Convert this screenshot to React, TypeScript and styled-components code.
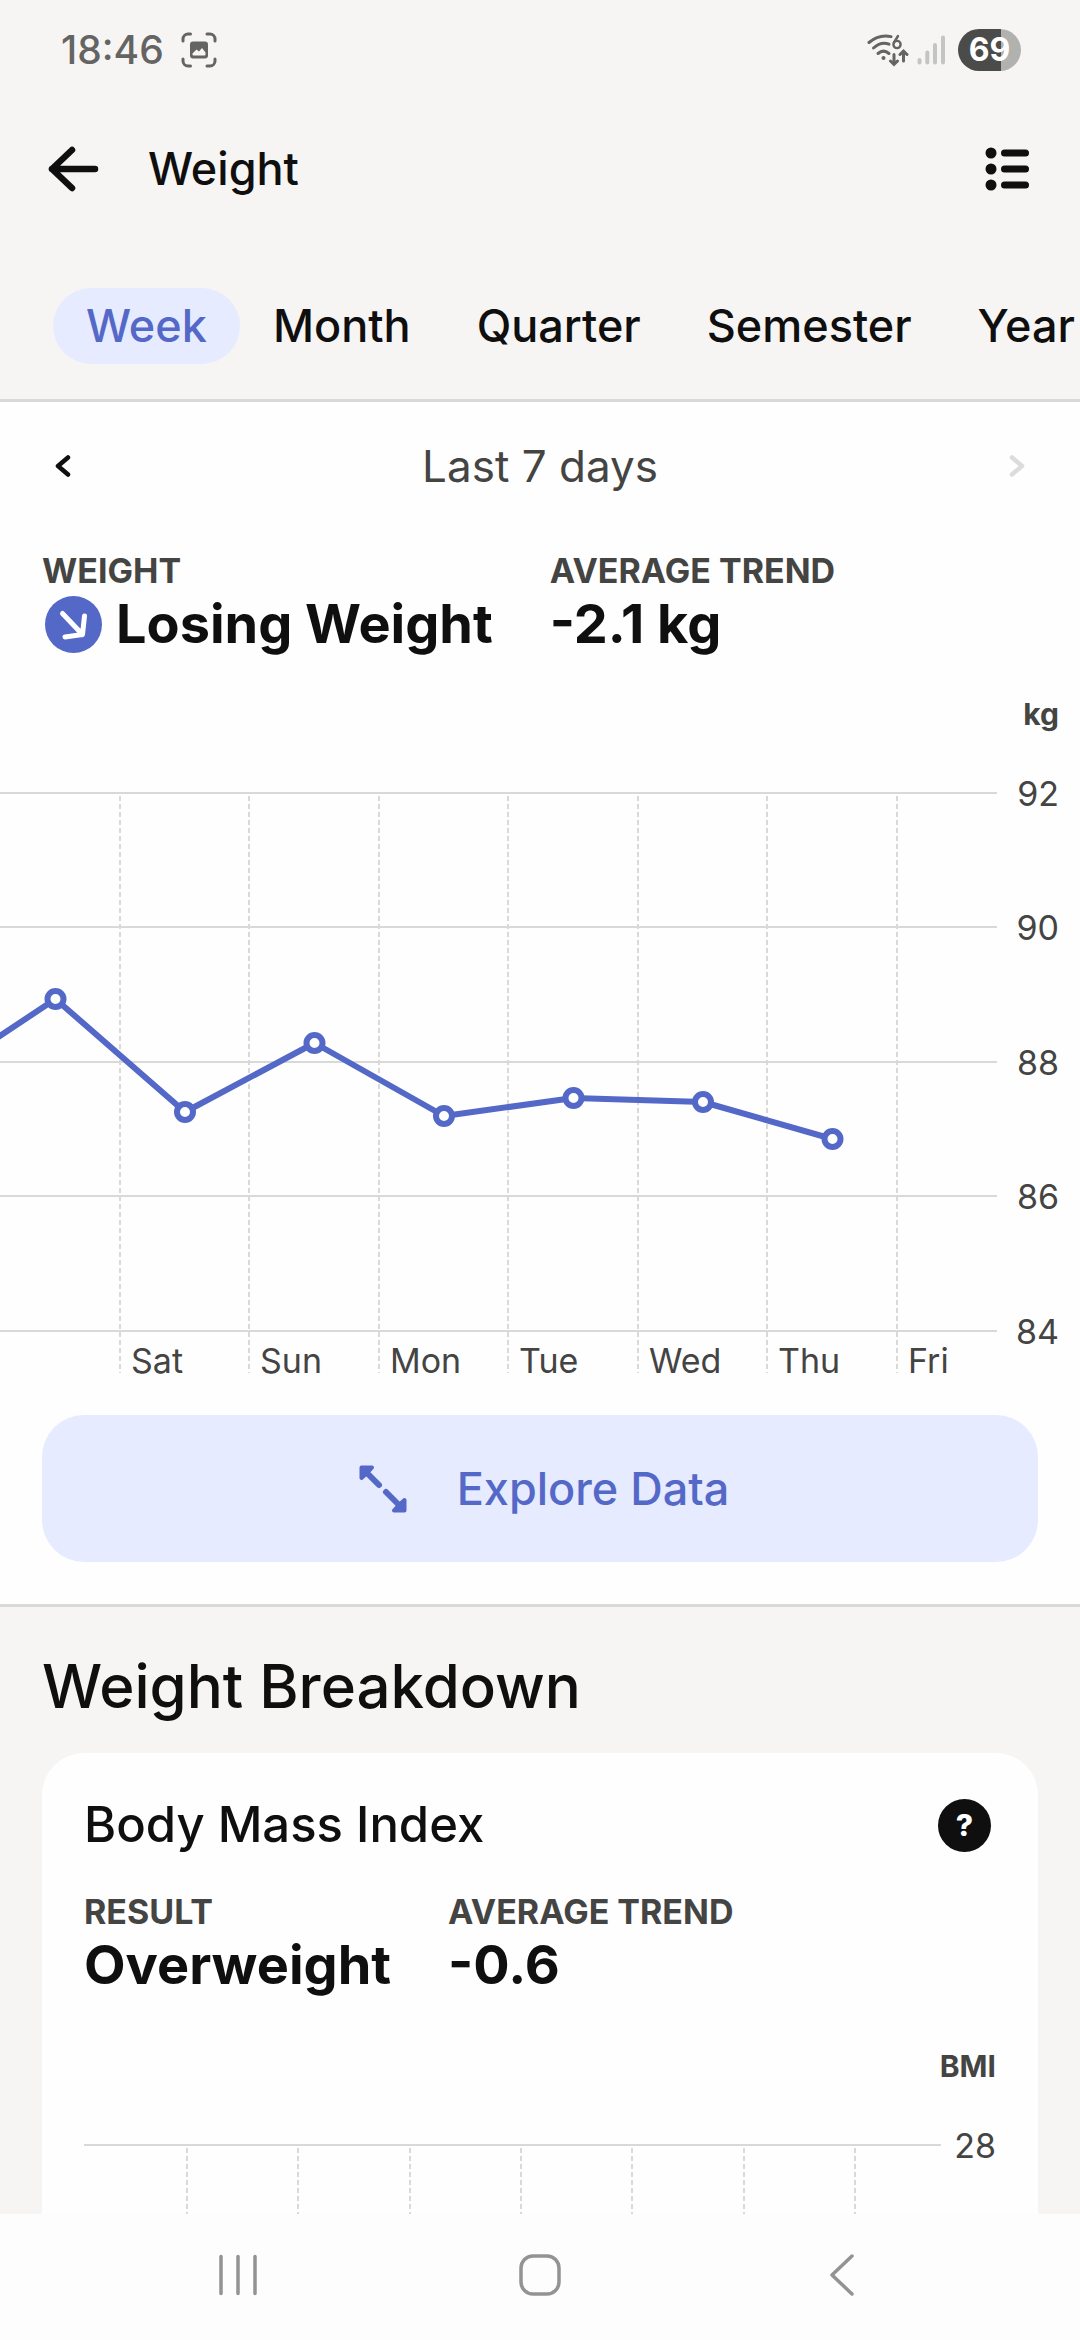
import React from "react";
import styled, { createGlobalStyle } from "styled-components";

const color = {
  page: "#f6f5f3",
  surface: "#fefefe",
  ink: "#0f0f0f",
  muted: "#444443",
  line: "#d9d9d8",
  accent: "#5468c7",
  tint: "#e6ebff",
  disabled: "#dcdcdb",
  system: "#646463",
  nav: "#939393",
};

const font = `Inter, "Liberation Sans", sans-serif`;

const GlobalStyle = createGlobalStyle`
  * { box-sizing: border-box; }
  body {
    margin: 0;
    background: ${color.page};
    color: ${color.ink};
    font-family: ${font};
  }
  button { font: inherit; color: inherit; border: 0; background: none; padding: 0; cursor: pointer; }
  h1, h2, h3, dl, dt, dd { margin: 0; }
  svg { display: block; flex: none; }
`;

const Screen = styled.div`
  height: 100vh;
  display: flex;
  flex-direction: column;
  overflow: hidden;
`;

const StatusBar = styled.div`
  flex: none;
  height: 100px;
  padding: 0 59px 0 61px;
  display: flex;
  align-items: center;
  justify-content: space-between;
  color: ${color.system};
`;

const StatusGroup = styled.div<{ $gap: number }>`
  display: flex;
  align-items: center;
  gap: ${(p) => p.$gap}px;
`;

const Clock = styled.span`
  font-size: 39px;
  line-height: 44px;
  font-weight: 500;
`;

const Battery = styled.span`
  width: 63px;
  height: 42px;
  margin-left: 4px;
  border-radius: 21px;
  background: linear-gradient(to right, #4b4b4a 69%, #b1b1b0 69%);
  color: #ffffff;
  font-size: 32px;
  line-height: 42px;
  font-weight: 700;
  text-align: center;
`;

const AppBar = styled.header`
  flex: none;
  height: 138px;
  padding: 0 51px 0 48px;
  display: flex;
  align-items: center;
`;

const Title = styled.h1`
  flex: 1;
  margin-left: 49px;
  font-size: 45px;
  line-height: 60px;
  font-weight: 500;
`;

const Tabs = styled.nav`
  flex: none;
  display: flex;
  padding: 50px 0 35px 53px;
  border-bottom: 3px solid ${color.line};
  overflow: hidden;
`;

const Tab = styled.button<{ $active?: boolean }>`
  flex: none;
  height: 76px;
  padding: 0 33px;
  border-radius: 38px;
  font-size: 45px;
  line-height: 60px;
  font-weight: 500;
  background: ${(p) => (p.$active ? color.tint : "transparent")};
  color: ${(p) => (p.$active ? color.accent : color.ink)};
`;

const Content = styled.main`
  flex: 1;
  min-height: 0;
  overflow-y: auto;
  scrollbar-width: none;
`;

const Panel = styled.section`
  background: ${color.surface};
  border-bottom: 3px solid ${color.line};
  padding-bottom: 42px;
`;

const RangeRow = styled.div`
  height: 128px;
  padding: 0 55px;
  display: flex;
  align-items: center;
  justify-content: space-between;
`;

const RangeButton = styled.button`
  display: flex;
  &:disabled { color: ${color.disabled}; }
`;

const RangeLabel = styled.span`
  font-size: 44px;
  line-height: 60px;
  color: ${color.muted};
`;

const Stats = styled.dl<{ $inset?: boolean }>`
  display: flex;
  gap: 57px;
  padding: ${(p) => (p.$inset ? "35px 0 0" : "19px 42px 0")};
`;

const StatLabel = styled.dt`
  font-size: 34px;
  line-height: 44px;
  font-weight: 700;
  color: ${color.muted};
`;

const StatValue = styled.dd`
  display: flex;
  align-items: center;
  gap: 14px;
  font-size: 54px;
  line-height: 62px;
  font-weight: 700;
  white-space: nowrap;
`;

const TrendBadge = styled.span`
  width: 57px;
  height: 57px;
  margin-left: 3px;
  border-radius: 50%;
  background: ${color.accent};
`;

const Chart = styled.svg`
  width: 100%;
  height: auto;
  font-family: ${font};
  fill: ${color.muted};
`;

const ExploreButton = styled.button`
  display: flex;
  align-items: center;
  justify-content: center;
  gap: 50px;
  width: calc(100% - 84px);
  height: 147px;
  margin: 30px 42px 0;
  padding-left: 8px;
  border-radius: 42px;
  background: ${color.tint};
  color: ${color.accent};
  font-size: 45px;
  line-height: 60px;
  font-weight: 500;
`;

const Breakdown = styled.section`
  padding: 41px 42px 42px;
`;

const SectionTitle = styled.h2`
  font-size: 60px;
  line-height: 76px;
  font-weight: 500;
`;

const Card = styled.article`
  margin-top: 29px;
  padding: 42px;
  border-radius: 42px;
  background: ${color.surface};
`;

const CardHeader = styled.div`
  display: flex;
  align-items: center;
  justify-content: space-between;
  height: 60px;
  padding-right: 5px;
`;

const CardTitle = styled.h3`
  font-size: 49px;
  line-height: 60px;
  font-weight: 500;
`;

const HelpButton = styled.button`
  width: 53px;
  height: 53px;
  border-radius: 50%;
  background: ${color.ink};
  color: #ffffff;
  font-size: 30px;
  line-height: 53px;
  font-weight: 800;
`;

const NavBar = styled.nav`
  flex: none;
  height: 126px;
  padding: 0 208px 4px;
  display: flex;
  align-items: center;
  justify-content: space-between;
  background: #fdfdfd;
`;

const NavButton = styled.button`
  width: 60px;
  height: 60px;
  display: flex;
  align-items: center;
  justify-content: center;
`;

const CaptureIcon = () => (
  <svg width="36" height="36" viewBox="0 0 36 36" aria-hidden="true">
    <g fill="none" stroke="currentColor" strokeWidth="3" strokeLinecap="round">
      <path d="M2 9V7a5 5 0 0 1 5-5h2.500M26 2h3a5 5 0 0 1 5 5v2M34 27v2a5 5 0 0 1-5 5h-3M9.500 34H7a5 5 0 0 1-5-5v-2" />
    </g>
    <path
      fillRule="evenodd"
      fill="currentColor"
      d="M12 9.500h12a3 3 0 0 1 3 3v11a3 3 0 0 1-3 3H12a3 3 0 0 1-3-3v-11a3 3 0 0 1 3-3ZM11.500 22.500q0 1 1 1h11q1 0 1-1v-2l-3.500-4.500-3 3.500-2.500-2-4 4Z"
    />
  </svg>
);

const WifiIcon = () => (
  <svg width="42" height="34" viewBox="0 0 42 34" fill="none" stroke="currentColor" aria-hidden="true">
    <g strokeWidth="3" strokeLinecap="round">
      <path d="M2 9.500Q12 1 24 3.600" />
      <path d="M6.500 15Q14 8.200 22 11.200" />
      <path d="M11 20.500q5.500-4.800 11 0" />
      <path d="M27 21.500v9M23.500 28l3.500 3.500 3.500-3.500M36.500 28v-9M33 21.500l3.500-3.500 3.500 3.500" />
    </g>
    <circle cx="16.500" cy="25" r="2" fill="currentColor" stroke="none" />
    <circle cx="30" cy="11.500" r="3.600" strokeWidth="2.400" />
    <path d="M27 9.500 31 3" strokeWidth="2.400" strokeLinecap="round" />
  </svg>
);

const SignalIcon = () => (
  <svg width="29" height="30" viewBox="0 0 29 30" fill="none" stroke="#c4c4c3" strokeWidth="4" strokeLinecap="round" aria-hidden="true">
    <path d="M2.500 25v2.500M10.300 17.500v10M18 10v17.500M26 2.500v25" />
  </svg>
);

const BackIcon = () => (
  <svg width="51" height="46" viewBox="0 0 51 46" fill="none" stroke="currentColor" strokeWidth="6.500" strokeLinecap="round" strokeLinejoin="round" aria-hidden="true">
    <path d="M24 4 4 23 24 42M4 23h43" />
  </svg>
);

const ListIcon = () => (
  <svg width="44" height="46" viewBox="0 0 44 46" aria-hidden="true">
    {[7, 23, 39].map((y) => (
      <g key={y} fill="currentColor">
        <circle cx="6" cy={y} r="5.500" />
        <rect x="16" y={y - 3.5} width="28" height="7" rx="3.500" />
      </g>
    ))}
  </svg>
);

const Chevron = ({ flip }: { flip?: boolean }) => (
  <svg width="16" height="22" viewBox="0 0 16 22" fill="none" stroke="currentColor" strokeWidth="4.500" strokeLinecap="round" strokeLinejoin="round" aria-hidden="true">
    <path d={flip ? "M3 2.500 13 11 3 19.500" : "M13 2.500 3 11 13 19.500"} />
  </svg>
);

const TrendDownIcon = () => (
  <svg width="57" height="57" viewBox="0 0 57 57" fill="none" stroke="#ffffff" strokeWidth="5" strokeLinecap="round" strokeLinejoin="round" aria-hidden="true">
    <path d="M17.500 17.500 37.500 38.500M39.500 20 37.500 38.500 20 41" />
  </svg>
);

const ExpandIcon = () => (
  <svg width="48" height="48" viewBox="0 0 48 48" fill="none" stroke="currentColor" strokeLinecap="round" strokeLinejoin="round" aria-hidden="true">
    <path strokeWidth="6" d="M5 5 20 20M27 27 43 43" />
    <path strokeWidth="4" fill="currentColor" d="M2.500 2.500H13L9 7 7 9 2.500 13ZM45.500 45.500H35L39 41 41 39 45.500 35Z" />
  </svg>
);

const DAY_WIDTH = 129.5;
const FIRST_DAY = 120;
const days = ["Sat", "Sun", "Mon", "Tue", "Wed", "Thu", "Fri"];
const ticks = [92, 90, 88, 86, 84];
const readings = [344, 457, 388, 461, 443, 447, 484];

const WeightChart = () => {
  const points = readings.map((y, i) => [55.5 + i * DAY_WIDTH, y]);
  return (
    <Chart viewBox="0 0 1080 730" role="img" aria-label="Weight over the last 7 days, in kilograms">
      <text x="1059" y="70" fontSize="30" fontWeight="700" textAnchor="end">kg</text>
      {ticks.map((tick, i) => {
        const y = 138 + Math.floor(i * 134.5);
        return (
          <g key={tick}>
            <path d={`M0 ${y}H997`} stroke={color.line} strokeWidth="2" />
            <text x="1059" y={y + 13} fontSize="34" textAnchor="end">{tick}</text>
          </g>
        );
      })}
      {days.map((day, i) => {
        const x = Math.floor(FIRST_DAY + i * DAY_WIDTH);
        return (
          <g key={day}>
            <path d={`M${x} 141V718`} stroke={color.line} strokeWidth="2" strokeDasharray="5 3" />
            <text x={x + 11} y="718" fontSize="34">{day}</text>
          </g>
        );
      })}
      <polyline
        points={`-74,430 ${points.map((p) => p.join(",")).join(" ")}`}
        fill="none"
        stroke={color.accent}
        strokeWidth="6"
        strokeLinejoin="round"
      />
      {points.map(([x, y]) => (
        <circle key={x} cx={x} cy={y} r="8" fill={color.surface} stroke={color.accent} strokeWidth="6" />
      ))}
    </Chart>
  );
};

const BmiChart = () => (
  <Chart viewBox="0 0 912 420" role="img" aria-label="Body mass index over the last 7 days">
    <text x="912" y="81" fontSize="30" fontWeight="700" textAnchor="end">BMI</text>
    <path d="M0 149H857" stroke={color.line} strokeWidth="2" />
    <text x="912" y="162" fontSize="34" textAnchor="end">28</text>
    {days.map((day, i) => (
      <path
        key={day}
        d={`M${Math.round(103 + i * 111.3)} 152V400`}
        stroke={color.line}
        strokeWidth="2"
        strokeDasharray="5 3"
      />
    ))}
  </Chart>
);

const periods = ["Week", "Month", "Quarter", "Semester", "Year"];

export default function App() {
  return (
    <Screen>
      <GlobalStyle />
      <StatusBar>
        <StatusGroup $gap={17}>
          <Clock>18:46</Clock>
          <CaptureIcon />
        </StatusGroup>
        <StatusGroup $gap={8}>
          <WifiIcon />
          <SignalIcon />
          <Battery>69</Battery>
        </StatusGroup>
      </StatusBar>
      <AppBar>
        <button aria-label="Back"><BackIcon /></button>
        <Title>Weight</Title>
        <button aria-label="Entries"><ListIcon /></button>
      </AppBar>
      <Tabs aria-label="Period">
        {periods.map((period, i) => (
          <Tab key={period} $active={i === 0} aria-pressed={i === 0}>{period}</Tab>
        ))}
      </Tabs>
      <Content>
        <Panel>
          <RangeRow>
            <RangeButton aria-label="Previous"><Chevron /></RangeButton>
            <RangeLabel>Last 7 days</RangeLabel>
            <RangeButton aria-label="Next" disabled><Chevron flip /></RangeButton>
          </RangeRow>
          <Stats>
            <div>
              <StatLabel>WEIGHT</StatLabel>
              <StatValue>
                <TrendBadge><TrendDownIcon /></TrendBadge>
                Losing Weight
              </StatValue>
            </div>
            <div>
              <StatLabel>AVERAGE TREND</StatLabel>
              <StatValue>-2.1 kg</StatValue>
            </div>
          </Stats>
          <WeightChart />
          <ExploreButton>
            <ExpandIcon />
            Explore Data
          </ExploreButton>
        </Panel>
        <Breakdown>
          <SectionTitle>Weight Breakdown</SectionTitle>
          <Card>
            <CardHeader>
              <CardTitle>Body Mass Index</CardTitle>
              <HelpButton aria-label="About body mass index">?</HelpButton>
            </CardHeader>
            <Stats $inset>
              <div>
                <StatLabel>RESULT</StatLabel>
                <StatValue>Overweight</StatValue>
              </div>
              <div>
                <StatLabel>AVERAGE TREND</StatLabel>
                <StatValue>-0.6</StatValue>
              </div>
            </Stats>
            <BmiChart />
          </Card>
        </Breakdown>
      </Content>
      <NavBar aria-label="System">
        <NavButton aria-label="Recent apps">
          <svg width="38" height="42" viewBox="0 0 38 42" stroke={color.nav} strokeWidth="3.500" strokeLinecap="round">
            <path d="M2 2.500v37M19 2.500v37M36 2.500v37" />
          </svg>
        </NavButton>
        <NavButton aria-label="Home">
          <svg width="42" height="42" viewBox="0 0 42 42" fill="none" stroke={color.nav} strokeWidth="3.500">
            <rect x="2" y="2" width="38" height="38" rx="12" />
          </svg>
        </NavButton>
        <NavButton aria-label="Back">
          <svg width="24" height="42" viewBox="0 0 24 42" fill="none" stroke={color.nav} strokeWidth="3.500" strokeLinecap="round" strokeLinejoin="round">
            <path d="M22 2 2 21 22 40" />
          </svg>
        </NavButton>
      </NavBar>
    </Screen>
  );
}
